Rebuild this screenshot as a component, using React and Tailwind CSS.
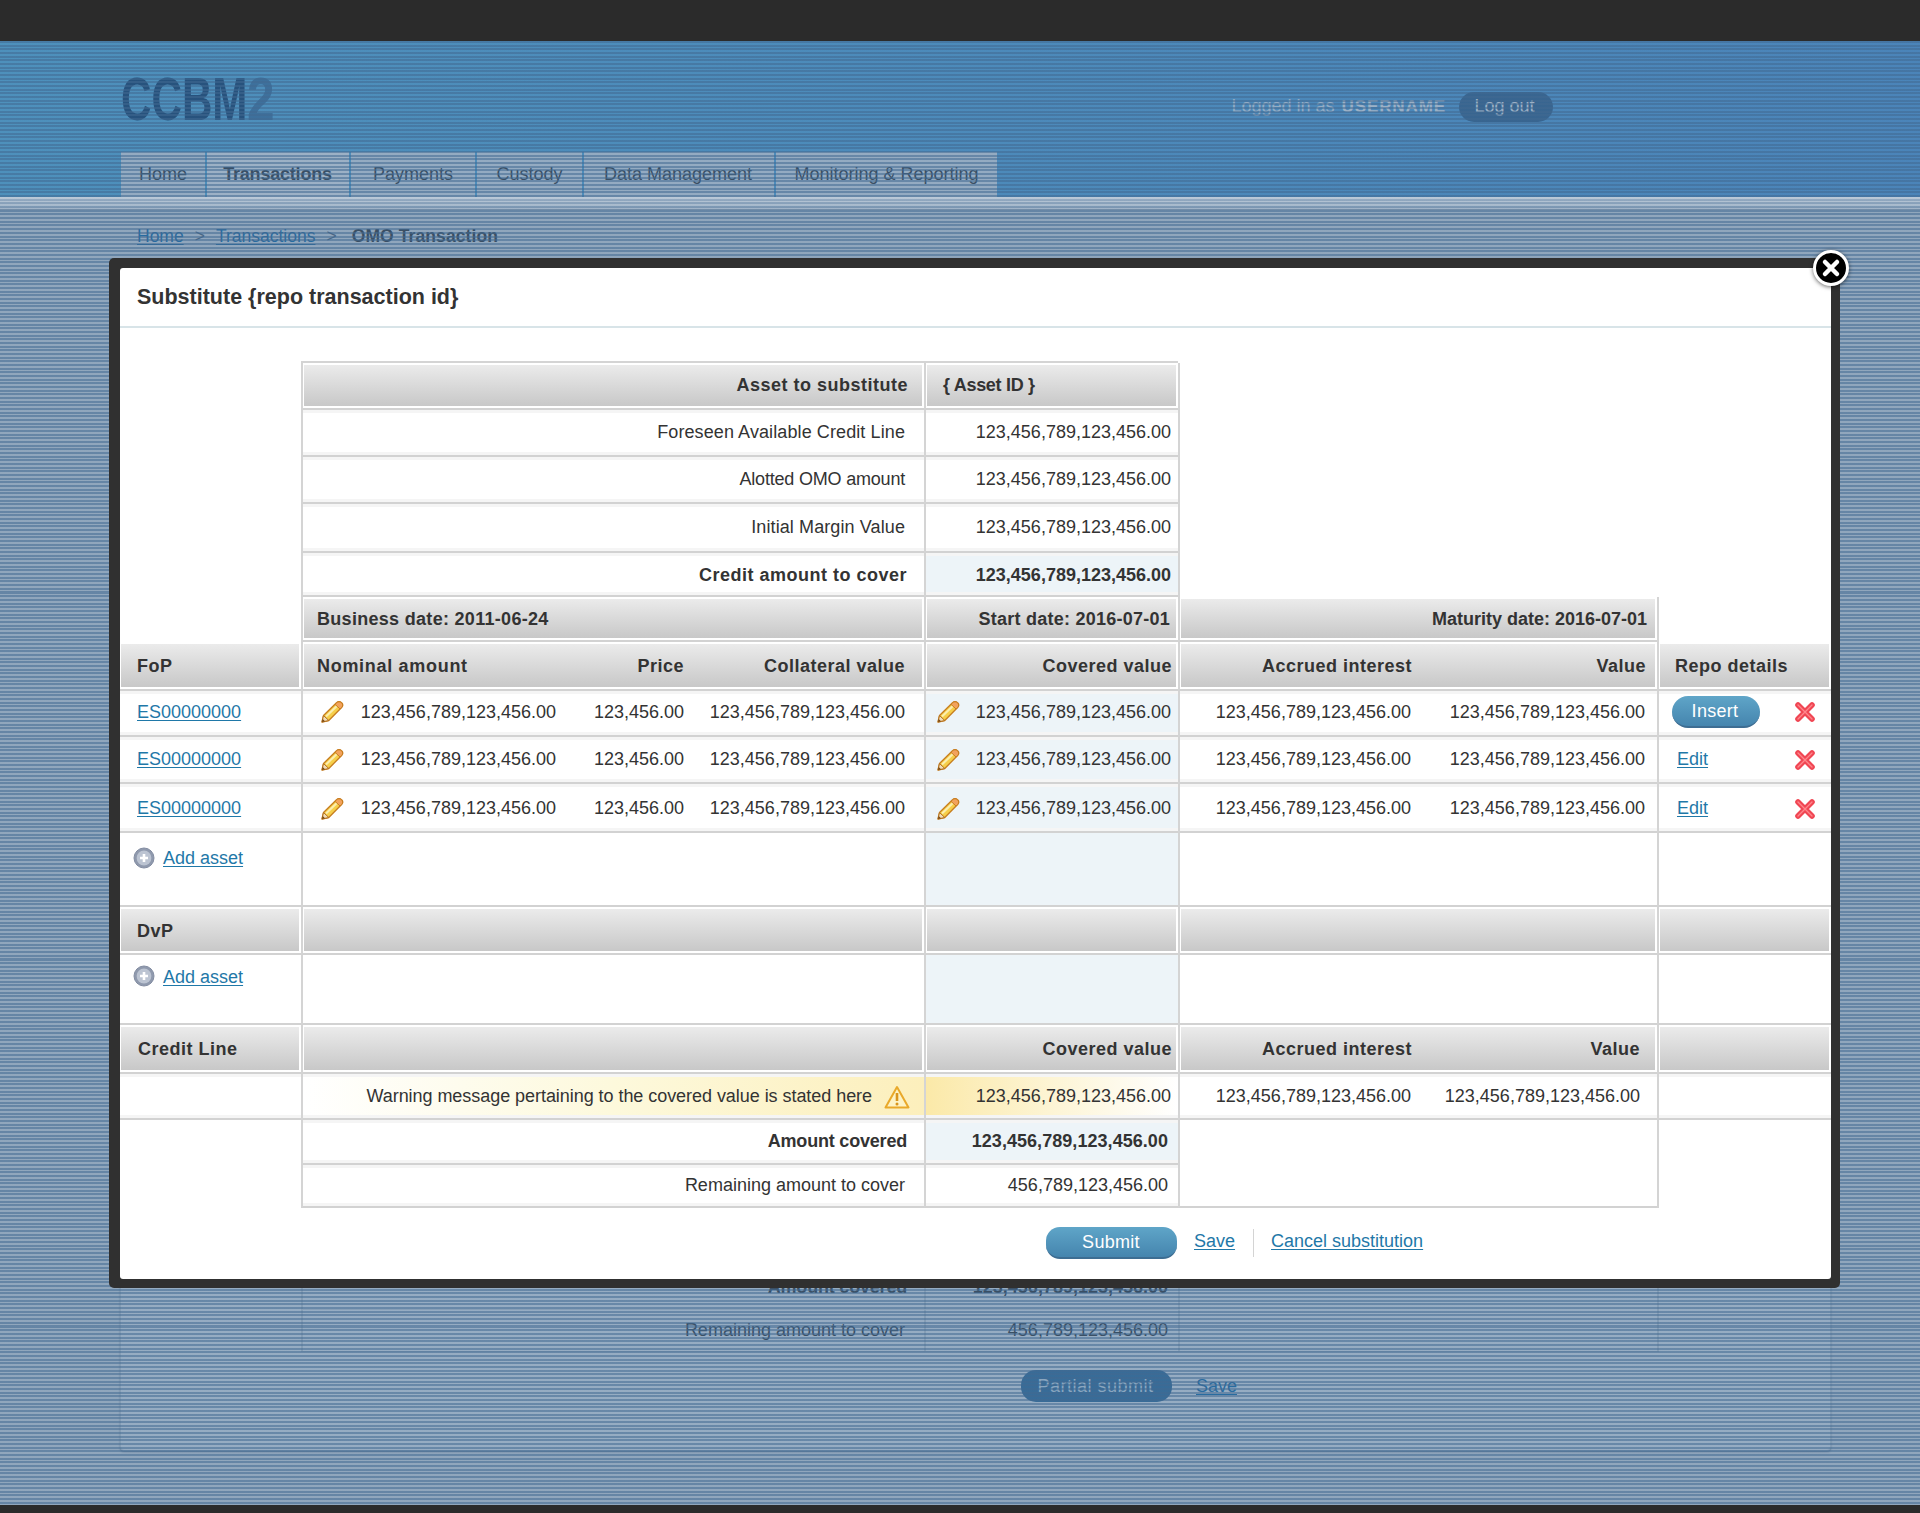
import React from "react";

const GRID = "grid grid-cols-[181px_623px_254px_479px_174px]";
const NUM = "123,456,789,123,456.00";
const LINK = "text-[#1f78a8] underline underline-offset-2";
const LINE = "border-l-2 border-l-[#d4d4d4]";

const Pencil = () => (
  <svg width="24" height="24" viewBox="0 0 24 24" className="shrink-0">
    <path d="M2 22 L3.5 15.5 L16.5 2.8 C18 1.4 20 1.4 21.6 2.8 C23 4.2 23 6 21.6 7.5 L8.8 20.5 Z" fill="#f6cf4a" stroke="#c77d1e" strokeWidth="1.3" strokeLinejoin="round" />
    <path d="M6 16.5 L18.5 4.5" stroke="#fbeeb0" strokeWidth="2" />
    <path d="M16.5 2.8 C18 1.4 20 1.4 21.6 2.8 C23 4.2 23 6 21.6 7.5 L20 9 L15 4.3 Z" fill="#f2a25c" stroke="#c77d1e" strokeWidth="1" />
    <path d="M2 22 L3.5 15.5 L8.8 20.5 Z" fill="#f0dcb8" stroke="#b4701c" strokeWidth="1" />
    <path d="M2 22 L2.7 19 L5 21.2 Z" fill="#7a4a14" />
  </svg>
);

const RedX = () => (
  <svg width="22" height="22" viewBox="0 0 22 22" className="shrink-0">
    <path d="M4 4 L18 18 M18 4 L4 18" stroke="#f04653" strokeWidth="5.6" strokeLinecap="round" />
    <path d="M4 4 L18 18 M18 4 L4 18" stroke="#ff868c" strokeWidth="1.4" strokeLinecap="round" />
  </svg>
);

const PlusCircle = ({ className = "" }) => (
  <svg width="22" height="22" viewBox="0 0 22 22" className={`shrink-0 ${className}`}>
    <circle cx="11" cy="11" r="10" fill="#8f99ad" stroke="#838da2" strokeWidth="1" />
    <circle cx="11" cy="11" r="7.4" fill="#bcc4d2" />
    <path d="M11 7 V15 M7 11 H15" stroke="#fff" strokeWidth="2.6" />
  </svg>
);

const Warn = () => (
  <svg width="26" height="24" viewBox="0 0 26 24" className="shrink-0">
    <path d="M13 2 L24.5 22.5 H1.5 Z" fill="#fdf3c6" stroke="#e9a92a" strokeWidth="2" strokeLinejoin="round" />
    <path d="M13 8 V16" stroke="#d9951c" strokeWidth="2.6" />
    <circle cx="13" cy="19" r="1.5" fill="#d9951c" />
  </svg>
);

const Head = ({ children, className = "", first = false }) => (
  <div className={`min-w-0 flex h-full ${first ? "pl-px" : `${LINE} pl-px`} pr-0.5 py-[2px] border-b-2 border-b-[#d2d2d2]`}>
    <div className={`flex-1 min-w-0 flex items-center pt-[2px] bg-gradient-to-b from-[#ebebeb] to-[#c8c8c8] text-[18px] font-bold tracking-[0.5px] text-[#333] ${className}`}>
      {children}
    </div>
  </div>
);

const Cell = ({ children, className = "", left = true, line = true, soft = true }) => (
  <div className={`min-w-0 flex items-center text-[18px] text-[#333] ${left ? LINE : ""} ${line ? "border-b-2 border-b-[#d2d2d2]" : ""} ${soft ? "shadow-[inset_0_3px_0_#f5f5f5,inset_0_-3px_0_#f5f5f5]" : ""} ${className}`}>
    {children}
  </div>
);

const Blank = () => <div />;

const SummaryRow = ({ h, label, value, labelClass = "", valueClass = "", blue, right }) => (
  <div className={`${GRID} ${h}`}>
    <Blank />
    <Cell className={`justify-end pr-[19px] ${labelClass}`}>{label}</Cell>
    <Cell className={`justify-end pr-[7px] ${blue ? "bg-[#edf4f8]" : ""} ${valueClass}`}>{value}</Cell>
    <div className={LINE} />
    {right ? <div className={LINE} /> : <Blank />}
  </div>
);

const AssetRow = ({ h, action, shift = "" }) => (
  <div className={`${GRID} ${h}`}>
    <Cell left={false} className={`pl-[17px] ${shift}`}>
      <a className={LINK}>ES00000000</a>
    </Cell>
    <Cell className={shift}>
      <span className="w-[253px] flex items-center justify-between pl-[17px]"><Pencil /><span>{NUM}</span></span>
      <span className="w-[128px] text-right">123,456.00</span>
      <span className="w-[221px] text-right">{NUM}</span>
    </Cell>
    <Cell className={`bg-[#edf4f8] justify-between pl-[10px] pr-[7px] ${shift}`}><Pencil /><span>{NUM}</span></Cell>
    <Cell className={shift}>
      <span className="w-[231px] text-right">{NUM}</span>
      <span className="w-[234px] text-right">{NUM}</span>
    </Cell>
    <Cell className={`justify-between pr-[15px] ${shift}`}>{action}<RedX /></Cell>
  </div>
);

const AddRow = ({ h, top, icon }) => (
  <div className={`${GRID} ${h}`}>
    <Cell left={false} soft={false} className={`!items-start ${top} pl-[13px] gap-[8px]`}>
      <PlusCircle className={icon} />
      <a className={LINK}>Add asset</a>
    </Cell>
    <Cell soft={false} />
    <Cell soft={false} className="bg-[#edf4f8]" />
    <Cell soft={false} />
    <Cell soft={false} />
  </div>
);

const BgLines = "border-l-2 border-l-[#cfd6dc]";

export default function App() {
  return (
    <div className="relative w-full h-[1513px] overflow-hidden bg-[#e6e9ec] font-['Liberation_Sans',Arial,sans-serif]">
      {/* page beneath the mask */}
      <div className="h-[41px] bg-[#2b2b2b]" />
      <header className="h-[156px] bg-gradient-to-r from-[#5cbbea] to-[#56a2e4] pl-[121px] pr-[367px] flex flex-col">
        <div className="h-[111px] flex items-center justify-between pt-[20px]">
          <div className="flex items-baseline -mt-[16px] leading-none text-[62px] font-bold">
            <span className="inline-block origin-left scale-x-[0.68] -mr-[60px] text-[#0b3a68]">CCBM</span>
            <span className="inline-block origin-left scale-x-[0.8] text-[#3a78a8]">2</span>
          </div>
          <div className="flex items-center text-[#ffffff] text-[18px]">
            <span className="opacity-90">Logged in as</span>
            <span className="ml-[7px] font-bold tracking-[0.9px] opacity-100 text-[17px]">USERNAME</span>
            <span className="ml-[13px] w-[94px] h-[30px] pr-[3px] rounded-[15px] bg-[#2f618f] flex items-center justify-center text-[#ffffff]">Log out</span>
          </div>
        </div>
        <nav className="h-[45px] flex gap-[2px] text-[18px] text-[#333]">
          <a className="w-[84px] bg-[#eef3f7] flex items-center justify-center">Home</a>
          <a className="w-[142px] bg-[#ffffff] flex items-center justify-center font-bold tracking-[-0.2px] pr-[1px]">Transactions</a>
          <a className="w-[124px] bg-[#eef3f7] flex items-center justify-center">Payments</a>
          <a className="w-[105px] bg-[#eef3f7] flex items-center justify-center">Custody</a>
          <a className="w-[190px] bg-[#eef3f7] flex items-center justify-center pr-[2px]">Data Management</a>
          <a className="w-[221px] bg-[#eef3f7] flex items-center justify-center">Monitoring &amp; Reporting</a>
        </nav>
      </header>
      <div className="h-[13px] bg-gradient-to-b from-[#ffffff] to-[#eef1f4] border-b border-b-[#a9b4c0]" />
      <div className="h-[48px] pl-[137px] pt-[4px] flex items-center gap-[11px] text-[17.5px] text-[#55677a]">
        <a className="text-[#0d6fb0] underline underline-offset-2">Home</a>
        <span>&gt;</span>
        <a className="text-[#0d6fb0] underline underline-offset-2">Transactions</a>
        <span>&gt;</span>
        <span className="font-bold text-[#333] ml-[4px] tracking-[0.1px]">OMO Transaction</span>
      </div>
      <main className="ml-[120px] w-[1711px] h-[1193px] bg-[#f2f5f8] rounded-[4px] border border-[#ced6dc] shadow-[0_1px_2px_rgba(40,60,90,0.5)] flex flex-col justify-end">
        <div className={`${GRID} h-[44px] -ml-px`}>
          <Blank />
          <div className={`${BgLines} flex items-center justify-end pr-[17px] text-[18px] font-bold tracking-[-0.2px] text-[#333] border-b border-b-[#d5dbe0]`}>Amount covered</div>
          <div className={`${BgLines} flex items-center justify-end pr-[10px] text-[18px] font-bold text-[#333] border-b border-b-[#d5dbe0]`}>{NUM}</div>
          <div className={BgLines} />
          <div className={BgLines} />
        </div>
        <div className={`${GRID} h-[42px] -ml-px`}>
          <Blank />
          <div className={`${BgLines} flex items-center justify-end pr-[19px] text-[18px] text-[#333] border-b border-b-[#d5dbe0]`}>Remaining amount to cover</div>
          <div className={`${BgLines} flex items-center justify-end pr-[10px] text-[18px] text-[#333] border-b border-b-[#d5dbe0]`}>456,789,123,456.00</div>
          <div className={`${BgLines} border-b border-b-[#d5dbe0]`} />
          <div className={BgLines} />
        </div>
        <div className="mt-[19px] mb-[48px] flex items-center pl-[900px] gap-[24px] text-[18px]">
          <span className="w-[151px] h-[32px] rounded-[15px] bg-[#2f6f9f] text-[#dbe8f2] tracking-[0.5px] pr-[2px] -mt-px flex items-center justify-center">Partial submit</span>
          <a className="text-[#0d6fb0] underline underline-offset-2 -mt-px">Save</a>
        </div>
      </main>
      <div className="absolute left-0 right-0 bottom-0 h-[8px] bg-[#2b2b2b]" />

      {/* striped mask */}
      <div className="absolute left-0 right-0 top-[41px] h-[1464px] bg-[repeating-linear-gradient(180deg,rgba(65,105,145,0.78)_0,rgba(65,105,145,0.78)_2px,rgba(65,105,145,0.52)_2px,rgba(65,105,145,0.52)_3.67px)]" />
      <div className="absolute left-0 right-0 top-[197px] h-[12px] bg-gradient-to-b from-[rgba(255,255,255,0.32)] to-[rgba(255,255,255,0.1)]" />

      {/* modal */}
      <div className="absolute left-[109px] top-[258px] w-[1731px] h-[1030px] pt-[10px] pl-[11px] pr-[9px] pb-[9px] bg-[#303030] rounded-[5px]">
        <div className="w-full h-full bg-white rounded-[3px] flex flex-col">
          <div className="h-[60px] shrink-0 flex items-center pl-[17px] pt-[1px] border-b-2 border-b-[#d8e4e8] text-[21.5px] font-bold text-[#333]">
            Substitute {"{repo transaction id}"}
          </div>
          <div className="h-[33px] shrink-0" />
          <div className="flex flex-col">
            <div className={`${GRID} h-[2px]`}>
              <Blank />
              <div className="bg-[#d4d4d4]" />
              <div className="bg-[#d4d4d4]" />
            </div>
            <div className={`${GRID} h-[47px]`}>
              <Blank />
              <Head className="justify-end !pt-0 pr-[14px]">Asset to substitute</Head>
              <Head className="pl-[16px] !pt-0 !tracking-[-0.3px]">{"{ Asset ID }"}</Head>
              <div className={LINE} />
            </div>
            <SummaryRow h="h-[47px]" label="Foreseen Available Credit Line" labelClass="tracking-[0.1px]" value={NUM} />
            <SummaryRow h="h-[47px]" label="Alotted OMO amount" labelClass="tracking-[-0.2px] pr-[18px]" value={NUM} />
            <SummaryRow h="h-[49px]" label="Initial Margin Value" labelClass="tracking-[0.1px]" value={NUM} />
            <SummaryRow h="h-[44px]" label="Credit amount to cover" labelClass="font-bold tracking-[0.5px] !pr-[17px] pt-[2px]" valueClass="font-bold pt-[2px]" value={NUM} blue />

            <div className={`${GRID} h-[45px]`}>
              <Blank />
              <Head className="pl-[13px] !tracking-[0.3px]">Business date: 2011-06-24</Head>
              <Head className="justify-end pr-[6px] !tracking-[0.25px]">Start date: 2016-07-01</Head>
              <Head className="justify-end pr-[8px] !tracking-[0px]">Maturity date: 2016-07-01</Head>
              <div className={LINE} />
            </div>
            <div className={`${GRID} h-[49px]`}>
              <Head first className="pl-[16px]">FoP</Head>
              <Head className="pl-[13px] justify-between pr-[17px]">
                <span className="tracking-[0.7px]">Nominal amount</span>
                <span className="flex"><span>Price</span><span className="w-[221px] text-right">Collateral value</span></span>
              </Head>
              <Head className="justify-end pr-[4px]">Covered value</Head>
              <Head className="justify-end pr-[9px]">
                <span className="tracking-[0.5px] mr-[-1px]">Accrued interest</span><span className="w-[235px] text-right">Value</span>
              </Head>
              <Head className="pl-[15px]">Repo details</Head>
            </div>
            <AssetRow h="h-[46px]" shift="pb-[2px]" action={<span className="ml-[13px] w-[88px] h-[32px] pr-[2px] rounded-[16px] bg-gradient-to-b from-[#5fa5c8] to-[#4585ae] border-b-2 border-b-[#3d6d92] text-white tracking-[0.3px] flex items-center justify-center">Insert</span>} />
            <AssetRow h="h-[47px]" action={<a className={`${LINK} ml-[18px]`}>Edit</a>} />
            <AssetRow h="h-[49px]" shift="pt-[2px]" action={<a className={`${LINK} ml-[18px]`}>Edit</a>} />
            <AddRow h="h-[74px]" top="pt-[12px]" icon="mt-[2px]" />
            <div className={`${GRID} h-[48px]`}>
              <Head first className="pl-[16px]">DvP</Head>
              <Head />
              <Head />
              <Head />
              <Head />
            </div>
            <AddRow h="h-[70px]" top="pt-[9px]" icon="mt-px" />
            <div className={`${GRID} h-[49px]`}>
              <Head first className="pl-[17px]">Credit Line</Head>
              <Head />
              <Head className="justify-end pr-[4px]">Covered value</Head>
              <Head className="justify-end pr-[15px]">
                <span className="tracking-[0.5px] mr-[-1px]">Accrued interest</span><span className="w-[229px] text-right">Value</span>
              </Head>
              <Head />
            </div>
            <div className={`${GRID} h-[46px]`}>
              <Cell left={false} />
              <Cell className="justify-end gap-[12px] pr-[14px] pt-[1px] tracking-[-0.05px] bg-gradient-to-r from-[#ffffff] via-[#fdf9dc] to-[#fcefbc]"><span>Warning message pertaining to the covered value is stated here</span><Warn /></Cell>
              <Cell className="justify-end pr-[7px] pt-[1px] bg-gradient-to-r from-[#fbe9a8] to-[#ffffff]">{NUM}</Cell>
              <Cell className="pt-[1px]">
                <span className="w-[231px] text-right">{NUM}</span>
                <span className="w-[229px] text-right">{NUM}</span>
              </Cell>
              <Cell />
            </div>
            <SummaryRow h="h-[45px]" label="Amount covered" labelClass="font-bold tracking-[-0.2px] !pr-[17px]" valueClass="font-bold !pr-[10px] tracking-[0.05px]" value={NUM} blue right />
            <div className={`${GRID} h-[43px]`}>
              <Blank />
              <Cell className="justify-end pr-[19px] pb-[1px]">Remaining amount to cover</Cell>
              <Cell className="justify-end pr-[10px] pb-[1px]">456,789,123,456.00</Cell>
              <Cell soft={false} />
              <div className={LINE} />
            </div>
          </div>
          <div className="mt-[19px] flex items-center pl-[926px] text-[18px]">
            <span className="w-[131px] h-[32px] rounded-[14px] bg-gradient-to-b from-[#5fa5c8] to-[#4585ae] border-b-2 border-b-[#3d6d92] text-white tracking-[0.3px] pr-[1px] flex items-center justify-center">Submit</span>
            <a className={`${LINK} ml-[17px] -mt-[3px]`}>Save</a>
            <span className="ml-[18px] w-px h-[28px] bg-[#d4d4d4]" />
            <a className={`${LINK} ml-[17px] -mt-[3px]`}>Cancel substitution</a>
          </div>
        </div>
        {/* close button */}
        <div className="absolute left-[1704px] -top-[8px] w-[36px] h-[36px] rounded-full bg-black border-[3px] border-white shadow-[0_1px_4px_rgba(0,0,0,0.6)] flex items-center justify-center">
          <svg width="20" height="20" viewBox="0 0 20 20"><path d="M4 4 L16 16 M16 4 L4 16" stroke="#fff" strokeWidth="4.5" strokeLinecap="round" /></svg>
        </div>
      </div>
    </div>
  );
}
